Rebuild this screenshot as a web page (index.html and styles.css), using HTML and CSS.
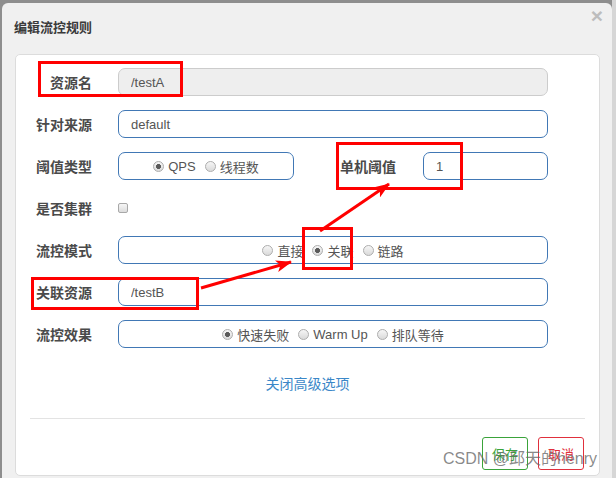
FILE: index.html
```html
<!DOCTYPE html>
<html lang="zh-CN">
<head>
  <meta charset="UTF-8">
  <meta name="viewport" content="width=device-width, initial-scale=1.0">
  <title>编辑流控规则</title>
  <link rel="stylesheet" href="styles.css">
</head>
<body>
  <div class="modal">
    <div class="modal-header">
      <h4 class="modal-title">编辑流控规则</h4>
      <span class="close">&times;</span>
    </div>
    <div class="panel">
      <form class="rule-form">
        <div class="form-row">
          <label class="row-label">资源名</label>
          <div class="field">
            <input class="text-input" type="text" value="/testA" disabled>
          </div>
        </div>
        <div class="form-row">
          <label class="row-label">针对来源</label>
          <div class="field">
            <input class="text-input" type="text" value="default">
          </div>
        </div>
        <div class="form-row">
          <label class="row-label">阈值类型</label>
          <div class="field split">
            <div class="radio-box small">
              <label class="radio"><input type="radio" name="grade" checked> QPS</label>
              <label class="radio"><input type="radio" name="grade"> 线程数</label>
            </div>
            <label class="row-label inline">单机阈值</label>
            <input class="text-input count" type="text" value="1">
          </div>
        </div>
        <div class="form-row">
          <label class="row-label">是否集群</label>
          <div class="field">
            <input class="check" type="checkbox">
          </div>
        </div>
        <div class="form-row">
          <label class="row-label">流控模式</label>
          <div class="field">
            <div class="radio-box">
              <label class="radio"><input type="radio" name="strategy"> 直接</label>
              <label class="radio"><input type="radio" name="strategy" checked> 关联</label>
              <label class="radio"><input type="radio" name="strategy"> 链路</label>
            </div>
          </div>
        </div>
        <div class="form-row">
          <label class="row-label">关联资源</label>
          <div class="field">
            <input class="text-input" type="text" value="/testB">
          </div>
        </div>
        <div class="form-row">
          <label class="row-label">流控效果</label>
          <div class="field">
            <div class="radio-box">
              <label class="radio"><input type="radio" name="behavior" checked> 快速失败</label>
              <label class="radio"><input type="radio" name="behavior"> Warm Up</label>
              <label class="radio"><input type="radio" name="behavior"> 排队等待</label>
            </div>
          </div>
        </div>
        <div class="advanced">
          <a class="advanced-link" href="#">关闭高级选项</a>
        </div>
        <hr class="divider">
        <div class="button-group">
          <button type="button" class="btn btn-save">保存</button>
          <button type="button" class="btn btn-cancel">取消</button>
        </div>
      </form>
    </div>
  </div>

  <svg class="marks" width="616" height="478" viewBox="0 0 616 478">
    <defs>
      <marker id="head" markerUnits="userSpaceOnUse" markerWidth="16" markerHeight="12" refX="15" refY="6" orient="auto">
        <path d="M0,0 L16,6 L0,12 L4,6 z" fill="#f00"/>
      </marker>
    </defs>
    <g fill="none" stroke="#f00" stroke-width="3">
      <rect x="39.5" y="62.5" width="142" height="33"/>
      <rect x="337.5" y="143.5" width="124" height="45"/>
      <rect x="303.5" y="228.5" width="48" height="40"/>
      <rect x="32.5" y="278.5" width="165" height="30"/>
      <line x1="201" y1="288" x2="291" y2="262" marker-end="url(#head)"/>
      <line x1="320" y1="231" x2="389" y2="184" marker-end="url(#head)"/>
    </g>
  </svg>
  <div class="watermark">CSDN @邱天的henry</div>
</body>
</html>
```

FILE: styles.css
```css
body {
  margin: 0;
  height: 478px;
  overflow: hidden;
  position: relative;
  background: linear-gradient(to right, #8e8e8e 0, #8e8e8e 612px, #d6d6d6 612px);
  font-family: "Liberation Sans", "Noto Sans CJK SC", sans-serif;
  color: #555;
}

.modal {
  margin: 3px 0 0 2px;
  width: 610px;
  height: 475px;
  overflow: hidden;
  background: #f0f0f0;
  border-radius: 6px 6px 0 0;
  box-sizing: border-box;
  padding: 0 12px 0 13px;
}

.modal-header {
  display: flex;
  justify-content: space-between;
  align-items: flex-start;
  height: 51px;
}

.modal-title {
  margin: 15px 0 0 -1px;
  font-size: 13px;
  line-height: 18px;
  font-weight: bold;
  color: #3a3a3a;
  font-family: "Noto Sans CJK SC", sans-serif;
}

.close {
  margin: 1px -3px 0 0;
  font-size: 21px;
  line-height: 24px;
  font-weight: bold;
  color: #bdbdbd;
}

.panel {
  background: #fff;
  border: 1px solid #dcdcdc;
  border-radius: 5px;
  padding-top: 13px;
  height: 407px;
}

.form-row {
  display: flex;
  align-items: center;
  height: 28px;
  margin-bottom: 14px;
}

.row-label {
  width: 76px;
  text-align: right;
  font-family: "Noto Sans CJK SC", sans-serif;
  font-size: 14px;
  font-weight: bold;
  color: #4a4a4a;
  flex-shrink: 0;
}

.field {
  margin-left: 26px;
  width: 430px;
  height: 28px;
  display: flex;
  align-items: center;
}

.split .row-label.inline {
  width: 102px;
}

.text-input {
  box-sizing: border-box;
  width: 100%;
  height: 28px;
  padding: 0 12px;
  border: 1px solid #4178b5;
  border-radius: 7px;
  font-family: "Liberation Sans", "Noto Sans CJK SC", sans-serif;
  font-size: 13px;
  color: #555;
  background: #fff;
  outline: none;
}

.text-input:disabled {
  background: #eee;
  border-color: #ccc;
  color: #555;
}

.text-input.count {
  width: 125px;
  margin-left: 27px;
}

.radio-box {
  box-sizing: border-box;
  width: 100%;
  height: 28px;
  border: 1px solid #4178b5;
  border-radius: 7px;
  display: flex;
  justify-content: center;
  align-items: center;
  gap: 9px;
}

.radio-box.small {
  width: 176px;
  flex-shrink: 0;
}

.radio {
  display: flex;
  align-items: center;
  gap: 4px;
  font-size: 13px;
  color: #555;
  font-family: "Liberation Sans", "Noto Sans CJK SC", sans-serif;
}

.radio input {
  appearance: none;
  margin: 0;
  width: 11px;
  height: 11px;
  border: 1px solid #adadad;
  border-radius: 50%;
  background: linear-gradient(#f6f6f6, #dadada);
}

.radio input:checked {
  background: radial-gradient(circle, #5a5a5a 0, #5a5a5a 2.2px, transparent 2.8px), linear-gradient(#f6f6f6, #dadada);
}

.check {
  appearance: none;
  margin: 0;
  width: 10px;
  height: 10px;
  border: 1px solid #a8a8a8;
  border-radius: 2px;
  background: linear-gradient(#f6f6f6, #dcdcdc);
}

.advanced {
  text-align: center;
  margin-top: 25px;
  line-height: 20px;
}

.advanced-link {
  font-family: "Noto Sans CJK SC", sans-serif;
  font-size: 14px;
  color: #3a87c8;
  text-decoration: none;
}

.divider {
  margin: 24px 14px 0;
  border: none;
  border-top: 1px solid #e3e3e3;
}

.button-group {
  display: flex;
  justify-content: flex-end;
  gap: 10px;
  margin: 18px 15px 0 0;
}

.btn {
  width: 46px;
  height: 33px;
  padding: 0;
  background: #fff;
  border: 1px solid;
  border-radius: 3px;
  font-family: "Noto Sans CJK SC", sans-serif;
  font-size: 13px;
}

.btn-save {
  border-color: #3aa33a;
  color: #3aa33a;
}

.btn-cancel {
  border-color: #e0303d;
  color: #e0303d;
}

.marks {
  position: absolute;
  top: 0;
  left: 0;
  pointer-events: none;
}

.watermark {
  position: absolute;
  left: 443px;
  top: 449px;
  font-family: "Liberation Sans", "Noto Sans CJK SC", sans-serif;
  font-size: 16px;
  line-height: 20px;
  color: rgba(105, 105, 105, 0.78);
  pointer-events: none;
}
```
